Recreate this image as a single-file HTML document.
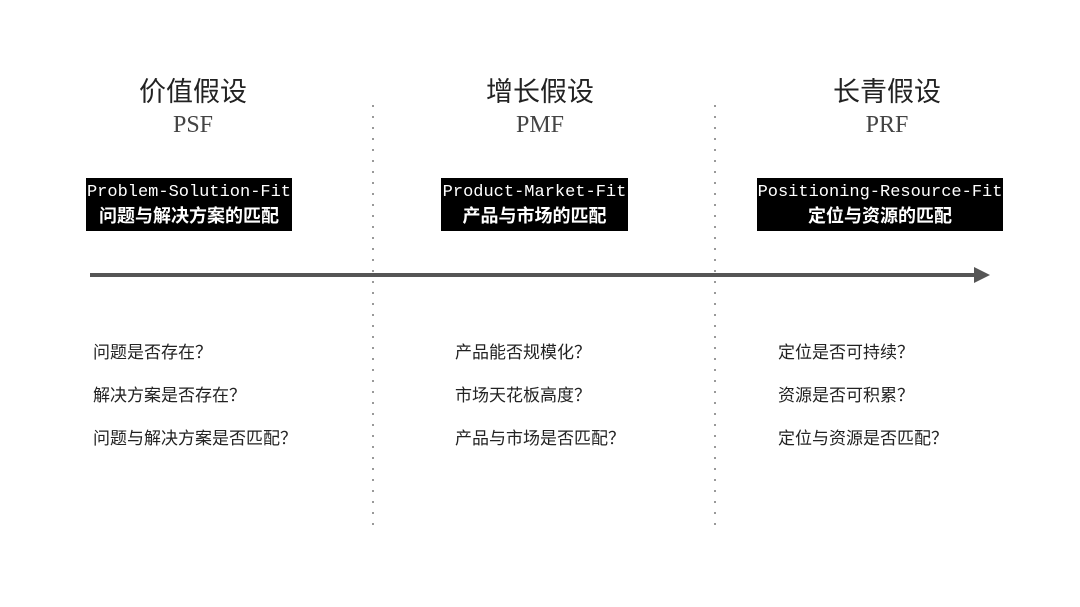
<!DOCTYPE html>
<html><head><meta charset="utf-8"><style>
body{margin:0;width:1080px;height:607px;background:#fff;position:relative;overflow:hidden;font-family:"Liberation Sans","Noto Sans CJK SC",sans-serif;color:#222}
.t{position:absolute;font-size:27px;text-align:center;width:240px;line-height:30px;color:#222}
.s{position:absolute;font-family:"Liberation Serif","Noto Serif CJK SC",serif;font-size:24px;text-align:center;width:240px;color:#444}
.b{position:absolute;top:178px;height:53px;background:#000;color:#fff;text-align:center}
.b .m{font-family:"Liberation Mono",monospace;font-size:17px;line-height:24px;margin-top:3px;white-space:nowrap}
.b .c{font-size:18px;font-weight:bold;line-height:22px;white-space:nowrap}
.d{position:absolute;top:105px;height:425px;width:2px;background:repeating-linear-gradient(to bottom,#999 0 2px,transparent 2px 11px)}
.q{position:absolute;font-size:17px;line-height:43px;color:#222}
</style></head><body>
<div class="t" style="left:73px;top:77px">价值假设</div>
<div class="s" style="left:73px;top:112px">PSF</div>
<div class="t" style="left:420px;top:77px">增长假设</div>
<div class="s" style="left:420px;top:112px">PMF</div>
<div class="t" style="left:767px;top:77px">长青假设</div>
<div class="s" style="left:767px;top:112px">PRF</div>
<div class="d" style="left:372px"></div>
<div class="d" style="left:714px"></div>
<div class="b" style="left:86px;width:206px"><div class="m">Problem-Solution-Fit</div><div class="c">问题与解决方案的匹配</div></div>
<div class="b" style="left:441px;width:187px"><div class="m">Product-Market-Fit</div><div class="c">产品与市场的匹配</div></div>
<div class="b" style="left:757px;width:246px"><div class="m">Positioning-Resource-Fit</div><div class="c">定位与资源的匹配</div></div>
<div style="position:absolute;left:90px;top:273px;width:888px;height:4px;background:#555"></div>
<div style="position:absolute;left:974px;top:267px;width:0;height:0;border-left:16px solid #555;border-top:8px solid transparent;border-bottom:8px solid transparent"></div>
<div class="q" style="left:93px;top:331px">问题是否存在？<br>解决方案是否存在？<br>问题与解决方案是否匹配？</div>
<div class="q" style="left:455px;top:331px">产品能否规模化？<br>市场天花板高度？<br>产品与市场是否匹配？</div>
<div class="q" style="left:778px;top:331px">定位是否可持续？<br>资源是否可积累？<br>定位与资源是否匹配？</div>
</body></html>
